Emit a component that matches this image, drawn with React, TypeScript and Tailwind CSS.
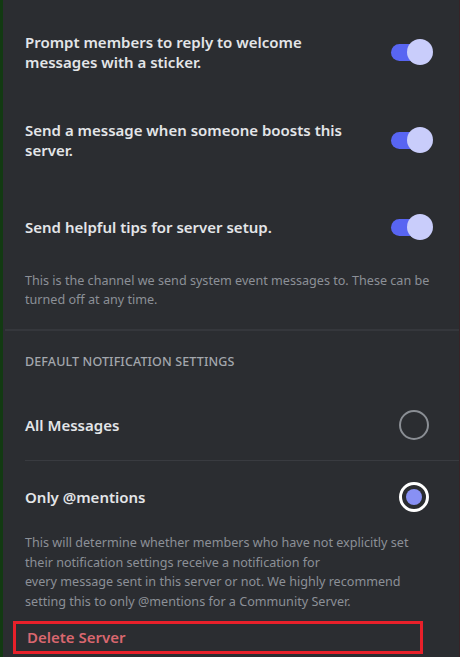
const Toggle = () => (
  <div className="relative w-[42px] h-[28px] shrink-0 flex items-center">
    <div className="w-[38px] h-[17px] rounded-full bg-[#5865f2]" />
    <div className="absolute right-0 top-[1px] w-[26px] h-[26px] rounded-full bg-[#c9cdfb]" />
  </div>
);

const Radio = ({ checked }: { checked?: boolean }) =>
  checked ? (
    <div className="w-[30px] h-[30px] rounded-full border-[3px] border-white flex items-center justify-center shrink-0">
      <div className="w-[16px] h-[16px] rounded-full bg-[#8890f4]" />
    </div>
  ) : (
    <div className="w-[30px] h-[30px] rounded-full border-[2.5px] border-[#8a8e94] shrink-0" />
  );

const ToggleRow = ({ children, className }: { children: React.ReactNode; className?: string }) => (
  <div className={`flex items-center justify-between ${className ?? ""}`}>
    <div className="text-[15px] leading-[20px] font-semibold text-[#e3e5e8] whitespace-nowrap">{children}</div>
    <Toggle />
  </div>
);

export default function App() {
  return (
    <div
      className="w-[460px] h-[657px] overflow-hidden bg-[#2b2d31] border-l-[3px] border-l-[#123a12] border-r border-r-[#3a2226] flex flex-col"
      style={{ fontFamily: '"Noto Sans", "Open Sans", sans-serif' }}
    >
      <div className="pl-[22px] pr-[26px] pt-[32px] flex flex-col">
        <ToggleRow>
          Prompt members to reply to welcome
          <br />
          messages with a sticker.
        </ToggleRow>
        <ToggleRow className="mt-[48px]">
          Send a message when someone boosts this
          <br />
          server.
        </ToggleRow>
        <ToggleRow className="mt-[53px]">Send helpful tips for server setup.</ToggleRow>
        <p className="mt-[30px] text-[12.6px] leading-[19px] text-[#8c9097] whitespace-nowrap">
          This is the channel we send system event messages to. These can be
          <br />
          turned off at any time.
        </p>
      </div>

      <div className="mt-[20px] ml-[2px] h-[2px] bg-[#35373c]" />

      <div className="pl-[22px] flex flex-col">
        <div className="mt-[23px] text-[12.5px] leading-[16px] font-medium tracking-[0.01em] text-[#a3a7ad]">
          DEFAULT NOTIFICATION SETTINGS
        </div>

        <div className="mt-[40px] pr-[30px] flex items-center justify-between h-[30px]">
          <span className="text-[15px] font-semibold text-[#e3e5e8]">All Messages</span>
          <Radio />
        </div>

        <div className="mt-[20px] h-px bg-[#393b40]" />

        <div className="mt-[21px] pr-[30px] flex items-center justify-between h-[30px]">
          <span className="text-[15px] font-semibold text-[#e3e5e8]">Only @mentions</span>
          <Radio checked />
        </div>

        <p className="mt-[21px] text-[12.6px] leading-[19.5px] text-[#8c9097] whitespace-nowrap">
          This will determine whether members who have not explicitly set
          <br />
          their notification settings receive a notification for
          <br />
          every message sent in this server or not. We highly recommend
          <br />
          setting this to only @mentions for a Community Server.
        </p>
      </div>

      <div className="mt-[10px] ml-[10px] w-[410px] h-[33px] shrink-0 border-[3px] border-[#e8202a] flex items-center pl-[11px]">
        <span className="text-[15px] font-semibold text-[#d9676f]">Delete Server</span>
      </div>
    </div>
  );
}
